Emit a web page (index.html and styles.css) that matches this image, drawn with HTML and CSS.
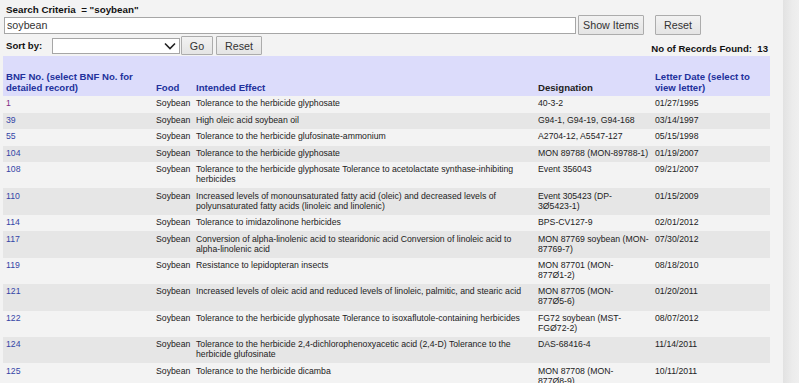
FILE: index.html
```html
<!DOCTYPE html>
<html lang="en">
<head>
  <meta charset="UTF-8">
  <title>Biotechnology Consultations - Inventory</title>
  <link rel="stylesheet" href="styles.css">
</head>
<body>
  <div class="Wrap">
    <div class="MainBox">
      <form class="SearchForm">
        <div class="Criteria">Search Criteria &nbsp;= "soybean"</div>
        <div class="SearchRow">
          <input class="SearchBox" type="text" value="soybean">
          <input class="Btn BtnShow" type="button" value="Show Items">
          <input class="Btn BtnReset" type="button" value="Reset">
        </div>
        <div class="SortRow">
          <label class="SortLabel">Sort by:</label>
          <div class="SelectWrap">
            <select class="SortSelect"><option></option></select>
            <svg class="SelectArrow" width="12" height="8" viewBox="0 0 12 8"><path d="M1 1.5 L6 6.5 L11 1.5" fill="none" stroke="#222" stroke-width="1.6"/></svg>
          </div>
          <input class="Btn BtnGo" type="button" value="Go">
          <input class="Btn BtnReset2" type="button" value="Reset">
          <span class="Count">No of Records Found: &nbsp;13</span>
        </div>
      </form>

      <table class="Results">
        <colgroup>
          <col class="cBnf"><col class="cFood"><col class="cEffect"><col class="cDesig"><col class="cDate">
        </colgroup>
        <thead>
          <tr>
            <th><a href="#">BNF No. (select BNF No. for detailed record)</a></th>
            <th><a href="#">Food</a></th>
            <th><a href="#">Intended Effect</a></th>
            <th class="plain">Designation</th>
            <th><a href="#">Letter Date (select to view letter)</a></th>
          </tr>
        </thead>
        <tbody>
          <tr><td><a class="visited" href="#">1</a></td><td>Soybean</td><td>Tolerance to the herbicide glyphosate</td><td>40-3-2</td><td>01/27/1995</td></tr>
          <tr><td><a href="#">39</a></td><td>Soybean</td><td>High oleic acid soybean oil</td><td>G94-1, G94-19, G94-168</td><td>03/14/1997</td></tr>
          <tr><td><a href="#">55</a></td><td>Soybean</td><td>Tolerance to the herbicide glufosinate-ammonium</td><td>A2704-12, A5547-127</td><td>05/15/1998</td></tr>
          <tr><td><a href="#">104</a></td><td>Soybean</td><td>Tolerance to the herbicide glyphosate</td><td>MON 89788 (MON-89788-1)</td><td>01/19/2007</td></tr>
          <tr><td><a href="#">108</a></td><td>Soybean</td><td>Tolerance to the herbicide glyphosate Tolerance to acetolactate synthase-inhibiting herbicides</td><td>Event 356043</td><td>09/21/2007</td></tr>
          <tr><td><a href="#">110</a></td><td>Soybean</td><td>Increased levels of monounsaturated fatty acid (oleic) and decreased levels of polyunsaturated fatty acids (linoleic and linolenic)</td><td>Event 305423 (DP-<br>3Ø5423-1)</td><td>01/15/2009</td></tr>
          <tr><td><a href="#">114</a></td><td>Soybean</td><td>Tolerance to imidazolinone herbicides</td><td>BPS-CV127-9</td><td>02/01/2012</td></tr>
          <tr><td><a href="#">117</a></td><td>Soybean</td><td>Conversion of alpha-linolenic acid to stearidonic acid Conversion of linoleic acid to alpha-linolenic acid</td><td>MON 87769 soybean (MON-<br>87769-7)</td><td>07/30/2012</td></tr>
          <tr><td><a href="#">119</a></td><td>Soybean</td><td>Resistance to lepidopteran insects</td><td>MON 87701 (MON-<br>877Ø1-2)</td><td>08/18/2010</td></tr>
          <tr><td><a href="#">121</a></td><td>Soybean</td><td>Increased levels of oleic acid and reduced levels of linoleic, palmitic, and stearic acid</td><td>MON 87705 (MON-<br>877Ø5-6)</td><td>01/20/2011</td></tr>
          <tr><td><a href="#">122</a></td><td>Soybean</td><td>Tolerance to the herbicide glyphosate Tolerance to isoxaflutole-containing herbicides</td><td>FG72 soybean (MST-<br>FGØ72-2)</td><td>08/07/2012</td></tr>
          <tr><td><a href="#">124</a></td><td>Soybean</td><td>Tolerance to the herbicide 2,4-dichlorophenoxyacetic acid (2,4-D) Tolerance to the herbicide glufosinate</td><td>DAS-68416-4</td><td>11/14/2011</td></tr>
          <tr><td><a href="#">125</a></td><td>Soybean</td><td>Tolerance to the herbicide dicamba</td><td>MON 87708 (MON-<br>877Ø8-9)</td><td>10/11/2011</td></tr>
        </tbody>
      </table>
    </div>
    <div class="Rail"></div>
  </div>
</body>
</html>
```

FILE: styles.css
```css
html, body{
  margin: 0;
  padding: 0;
}
body{
  background-color: #f3f3f3;
  font-family: "Liberation Sans", Arial, sans-serif;
  color: #222222;
  overflow: hidden;
}
.Wrap{
  display: flex;
  min-height: 100vh;
}
.MainBox{
  width: 767px;
  padding-left: 3px;
  flex: none;
}
.Rail{
  flex: 1;
  margin-left: 13px;
  background: linear-gradient(to right, #e2e2e2, #ececec 60%, #efefef);
}

/* search form */
.SearchForm{
  margin: 0;
}
.Criteria{
  margin-top: 4px;
  padding-left: 3px;
  font-size: 9.8px;
  line-height: 11px;
  font-weight: bold;
  color: #111111;
}
.SearchRow{
  display: flex;
  align-items: center;
  height: 20px;
}
.SearchBox{
  box-sizing: border-box;
  width: 572px;
  height: 17px;
  margin: 0 0 0 1px;
  padding: 0 2px;
  font-family: "Liberation Sans", Arial, sans-serif;
  font-size: 10.7px;
  color: #333333;
  background: #ffffff;
  border: 1px solid #a6a6a6;
}
.Btn{
  box-sizing: border-box;
  height: 20px;
  margin: 0;
  padding: 0 4px;
  font-family: "Liberation Sans", Arial, sans-serif;
  font-size: 10.7px;
  color: #333333;
  background: linear-gradient(#f2f2f2, #e4e4e4);
  border: 1px solid #acacac;
  border-radius: 1px;
}
.BtnShow{
  width: 66px;
  margin-left: 2px;
}
.BtnReset{
  width: 46px;
  margin-left: 11px;
}
.SortRow{
  display: flex;
  align-items: center;
  height: 19px;
  margin-top: 1px;
}
.SortLabel{
  width: 46px;
  padding-left: 3px;
  font-size: 9.6px;
  font-weight: bold;
  color: #111111;
}
.SelectWrap{
  display: flex;
  align-items: center;
}
.SortSelect{
  box-sizing: border-box;
  width: 128px;
  height: 16px;
  margin: 0;
  -webkit-appearance: none;
  appearance: none;
  background: #ffffff;
  border: 1px solid #a6a6a6;
  border-radius: 0;
}
.SelectArrow{
  margin-left: -16px;
  pointer-events: none;
}
.BtnGo{
  width: 32px;
  height: 19px;
  margin-left: 5px;
}
.BtnReset2{
  width: 46px;
  height: 19px;
  margin-left: 3px;
}
.Count{
  margin-left: auto;
  padding-top: 5px;
  padding-right: 2px;
  font-size: 9.6px;
  font-weight: bold;
  color: #111111;
}

/* results table */
.Results{
  width: 767px;
  margin-top: 1px;
  table-layout: fixed;
  border-collapse: collapse;
}
.cBnf{ width: 150px; }
.cFood{ width: 40px; }
.cEffect{ width: 342px; }
.cDesig{ width: 117px; }
.cDate{ width: 118px; }

.Results th{
  padding: 15px 3px 3px 3px;
  font-size: 9.6px;
  line-height: 11px;
  font-weight: bold;
  text-align: left;
  vertical-align: bottom;
  background-color: #dcdcfb;
  color: #222222;
}
.Results th a{
  color: #22319c;
  text-decoration: none;
}
.Results td{
  padding: 3.3px 3px;
  font-size: 8.7px;
  line-height: 9.9px;
  vertical-align: top;
  color: #222222;
}
.Results td:nth-child(4){
  padding-right: 0;
}
.Results td a{
  color: #3345a6;
  text-decoration: none;
}
.Results td a.visited{
  color: #7d2d87;
}
.Results tbody tr:nth-child(odd){
  background-color: #f3f3f3;
}
.Results tbody tr:nth-child(even){
  background-color: #e6e6e6;
}
```
